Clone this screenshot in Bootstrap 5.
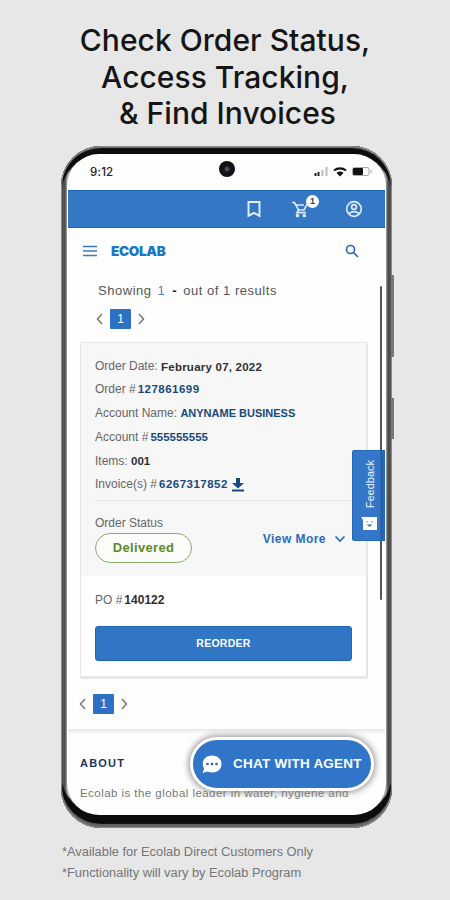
<!DOCTYPE html>
<html lang="en">
<head>
<meta charset="utf-8">
<meta name="viewport" content="width=device-width, initial-scale=1">
<title>Ecolab Orders</title>
<link href="https://cdn.jsdelivr.net/npm/bootstrap@5.3.0/dist/css/bootstrap.min.css" rel="stylesheet">
<style>
body{background:#e7e7e7;font-family:"Liberation Sans",Arial,sans-serif;color:#666;font-size:12px;line-height:16px;overflow:hidden}
.stage{width:450px;height:900px;padding-top:22px}
.headline{font:500 30px/36.5px Inter,sans-serif;color:#151515;height:124px;margin:0;letter-spacing:.03px}
.headline .third{padding-left:5px}
.phone{width:331px;height:682px;margin-left:61px;border-radius:40px;padding:8px 6px 13px;background:linear-gradient(90deg,#999 0,#555 2px,#4a4a4a 4px,#aaa 6px,#aaa 325px,#4a4a4a 327px,#444 329px,#999 331px);position:relative;box-shadow:inset 0 0 0 1px #8b8b8b,inset 0 2px 1px #777,inset 0 -4px 1px #666,inset 0 9px 1px #0c0c0c,inset 0 -14px 1px #0c0c0c,inset 0 0 2px 3px #555}
.side-key{position:absolute;left:330px;width:3px;background:#777}
.key-a{top:129px;height:82px}
.key-b{top:252px;height:41px}
.screen{height:661px;border-radius:32px;background:#fefefe;position:relative;overflow:hidden;padding:0 1px}
.status{height:36px;padding:0 13px 0 22px;color:#222;font:500 11.5px/36px Inter,sans-serif;letter-spacing:.2px}
.camera{position:absolute;left:152px;top:7px;width:16px;height:16px;border-radius:50%;background:radial-gradient(circle,#50505c 0 1.5px,#15151c 3px,#08080c)}
.topbar{height:38px;background:#3477c5;border:solid #1c68b6;border-width:1px 0;margin:0;padding-right:22px}
.cart{position:relative;margin-left:30px;margin-right:36px}
.cart-count{position:absolute;left:15px;top:-5px;width:13px;height:13px;border-radius:50%;background:#fff;color:#345;font:bold 9px/13px "Liberation Sans",sans-serif;text-align:center}
.brandrow{height:45px;padding:0 26px 0 15px}
.logo{font:900 13.5px/16px Inter,sans-serif;color:#1878c2;letter-spacing:-.3px;margin-left:14px}
.showing{height:36px;padding:0 0 0 30px;font-size:13px;line-height:36px;letter-spacing:.53px;color:#555}
.showing .from{color:#4a83c8;margin-left:6px}
.showing .dash{color:#222;font-weight:bold;margin:0 6px 0 7px}
.pager{height:20px;gap:7px}
.pager-top{padding-left:28px}
.pager-end{padding-left:11px;margin-top:15px}
.pager .pg{width:21px;height:20px;background:#2d71c4;color:#fff;font-size:12px;line-height:20px;border-radius:1px}
.order{width:288px;height:337px;margin:13px 0 0 12px;border:1px solid #e6e6e6;border-width:1px 2px 3px 1px;border-radius:2px;background:#fff;--bs-card-border-radius:2px}
.order-top{height:233px;background:#f7f7f7;padding:12px 13px 0 14px}
.orow{height:24px;line-height:24px;white-space:nowrap}
.orow b{color:#174a7c;font-size:11.5px}
.orow b.blk,.po b{color:#303030}
.orow b.num,.po b{margin-left:2px}
.orow b.date{letter-spacing:.23px;position:relative;top:1px}
.orow b.name{font-size:11px}
.wide{letter-spacing:.48px}
.orow.short{height:22px;line-height:22px}
.rule{height:1px;background:#e7e7e7;margin-top:5px}
.state{margin-top:14px}
.pill{width:97px;height:30px;margin-top:2px;border:1px solid #8aac6c;color:#5b8a2c;font-size:13px;letter-spacing:.35px;background:#fbfcfa}
.more{color:#2a6cba;font-size:12px;letter-spacing:.45px;padding:14px 7px 0 0}
.po{height:48px;padding-left:14px;line-height:48px}
.reorder{height:35px;width:257px;margin:2px 0 0 14px;background:#3175c5;border:1px solid #1e65b5;color:#fff;font-weight:bold;font-size:10.5px;letter-spacing:.25px;border-radius:3px;padding:0;--bs-btn-line-height:1}
.foot{margin-top:15px;height:84px;box-shadow:inset 0 5px 4px -3px #e2e2e2;padding:26px 0 0 12px}
.about{color:#1b3560;font:bold 11px/16px "Liberation Sans",sans-serif;letter-spacing:1.2px;margin:0 0 14px}
.blurb{font-size:11.5px;letter-spacing:.45px;white-space:nowrap;color:#777}
.chat{position:absolute;left:123px;top:583px;width:184px;height:54px;border:3px solid #fff;border-radius:27px;background:#3075c8;box-shadow:0 0 7px 1px #888;color:#fff;font-weight:bold;font-size:13.5px;letter-spacing:.24px;gap:11px;padding-left:9px;white-space:nowrap}
.scrollbar-thumb{position:absolute;left:313px;top:132px;width:2px;height:314px;background:#555;border-radius:1px}
.feedback{position:absolute;left:291px;top:304px;width:33px;height:91px;background:linear-gradient(90deg,#3477c8 28px,#285ea2 29px,#285ea2 31px,#3b78bd 32px);border-radius:3px 0 0 3px;color:#e8f2ff;box-shadow:inset 0 0 0 1px #2168b8}
.feedback span{writing-mode:vertical-rl;transform:rotate(180deg);font-size:11px;line-height:14px;margin:10px 0 0 3px}
.feedback svg{margin:9px 0 0 1px}
.notes{padding:14px 0 0 62px;font-size:12.85px;line-height:20.5px;color:#757575}
</style>
</head>
<body>
<main class="stage">
  <h1 class="headline text-center"><div>Check Order Status,</div><div>Access Tracking,</div><div class="third">&amp; Find Invoices</div></h1>
  <div class="phone">
    <i class="side-key key-a"></i><i class="side-key key-b"></i>
    <div class="screen">
      <div class="status d-flex align-items-center justify-content-between">
        <span>9:12</span>
        <svg width="59" height="14" viewBox="0 0 59 14"><path d="M2.500 8v3M5.500 7v4" stroke="#222" stroke-width="2"/><path d="M9.500 5v6M13.500 2v9" stroke="#bbb" stroke-width="2"/><path d="M21 5.500a9.500 9.500 0 0 1 12 0" fill="none" stroke="#111" stroke-width="2.200"/><path d="M23.500 8a5.500 5.500 0 0 1 7 0L27 11.500z" fill="#111"/><rect x="39.500" y="2.500" width="16.500" height="8" rx="2" fill="#fff" stroke="#aaa"/><rect x="40" y="3" width="10" height="7" rx="1" fill="#111"/><path d="M58 5v3" stroke="#aaa"/></svg>
      </div>
      <i class="camera"></i>
      <div class="topbar d-flex align-items-center justify-content-end">
        <svg width="14" height="18" viewBox="0 0 14 18" fill="none" stroke="#e4efff" stroke-width="1.900"><path d="M1.500 2h11v13.800L7 12.800l-5.500 3z"/></svg>
        <div class="cart d-flex"><svg width="18" height="18" viewBox="0 0 18 18" fill="none" stroke="#dceaff" stroke-width="1.700"><path d="M1 2.500h2.500l4 7.500h5.500l3-5.500M5 5h8M7.500 10l-1.500 2.700h9"/><circle cx="6.500" cy="15.500" r="1"/><circle cx="13.300" cy="15.500" r="1"/></svg><span class="cart-count">1</span></div>
        <svg width="18" height="18" viewBox="0 0 18 18" fill="none" stroke="#dceaff" stroke-width="1.700"><circle cx="9" cy="9" r="7.300"/><circle cx="9" cy="7" r="2.400"/><path d="M4 13.700q5-4 10 0"/></svg>
      </div>
      <div class="brandrow d-flex align-items-center">
        <svg width="14" height="12" viewBox="0 0 14 12" stroke="#3e79bd" stroke-width="1.500"><path d="M0 1.500h14M0 6h14M0 10.500h14"/></svg>
        <span class="logo">ECOLAB</span>
        <svg class="ms-auto" width="14" height="14" viewBox="0 0 14 14" fill="none" stroke="#2864c0" stroke-width="1.600"><circle cx="5.500" cy="5.500" r="4"/><path d="M8.500 8.500l4.500 4.500"/></svg>
      </div>
      <div class="showing">Showing<span class="from">1</span><span class="dash">-</span>out of 1 results</div>
      <div class="pager pager-top d-flex align-items-center">
        <svg width="7" height="12" viewBox="0 0 7 12" fill="none" stroke="#777" stroke-width="1.500"><path d="M6 1L1.500 6 6 11"/></svg><span class="pg text-center">1</span><svg width="7" height="12" viewBox="0 0 7 12" fill="none" stroke="#777" stroke-width="1.500"><path d="M1 1l4.500 5L1 11"/></svg>
      </div>
      <section class="order card">
        <div class="order-top">
          <div class="orow short">Order Date: <b class="blk date">February 07, 2022</b></div>
          <div class="orow">Order #<b class="num wide">127861699</b></div>
          <div class="orow">Account Name: <b class="name">ANYNAME BUSINESS</b></div>
          <div class="orow">Account #<b class="num">555555555</b></div>
          <div class="orow">Items: <b class="blk">001</b></div>
          <div class="orow short d-flex align-items-center">Invoice(s) #<b class="num wide">6267317852</b><svg class="ms-1" width="12" height="15" viewBox="0 0 12 15" fill="#174a7c"><path d="M4 1h4v5h4L6 11.500 0 6h4zM0 12.500h12v2H0z"/></svg></div>
          <div class="rule"></div>
          <div class="d-flex justify-content-between">
            <div><div class="state">Order Status</div><div class="pill rounded-pill d-flex align-items-center justify-content-center fw-bold">Delivered</div></div>
            <div class="more fw-bold d-flex align-items-center">View More<svg class="ms-2" width="12" height="8" viewBox="0 0 12 8" fill="none" stroke="#2a6cba" stroke-width="1.700"><path d="M1.500 1.500L6 6l4.500-4.500"/></svg></div>
          </div>
        </div>
        <div class="po">PO #<b>140122</b></div>
        <button class="reorder btn">REORDER</button>
      </section>
      <div class="pager pager-end d-flex align-items-center">
        <svg width="7" height="12" viewBox="0 0 7 12" fill="none" stroke="#777" stroke-width="1.500"><path d="M6 1L1.500 6 6 11"/></svg><span class="pg text-center">1</span><svg width="7" height="12" viewBox="0 0 7 12" fill="none" stroke="#777" stroke-width="1.500"><path d="M1 1l4.500 5L1 11"/></svg>
      </div>
      <div class="foot"><h2 class="about">ABOUT</h2><div class="blurb">Ecolab is the global leader in water, hygiene and</div></div>
      <div class="chat d-flex align-items-center">
        <svg width="20" height="19" viewBox="0 0 20 19"><path d="M10 0.500c5.500 0 9.500 3.500 9.500 8.500s-4 8.500-9.500 8.500c-1.500 0-3-.3-4.300-1L.5 18l1.700-4.300A8 8 0 0 1 .7 9C.7 4 4.600.5 10 .5z" fill="#fff"/><g fill="#2264b5"><circle cx="5.500" cy="9" r="1.300"/><circle cx="10" cy="9" r="1.300"/><circle cx="14.500" cy="9" r="1.300"/></g></svg>
        <span>CHAT WITH AGENT</span>
      </div>
      <i class="scrollbar-thumb"></i>
    </div>
    <div class="feedback d-flex flex-column align-items-center"><span>Feedback</span><svg width="16" height="13" viewBox="0 0 16 13"><path d="M0 0h16v13H2V3z" fill="#fff"/><path d="M6 4v1.500M11 4v1.500" stroke="#3477c8"/><path d="M5.500 7.500h6L8.500 10z" fill="#3477c8"/></svg></div>
  </div>
  <div class="notes"><div>*Available for Ecolab Direct Customers Only</div><div>*Functionality will vary by Ecolab Program</div></div>
</main>
<script src="https://cdn.jsdelivr.net/npm/bootstrap@5.3.0/dist/js/bootstrap.bundle.min.js"></script>
</body>
</html>
